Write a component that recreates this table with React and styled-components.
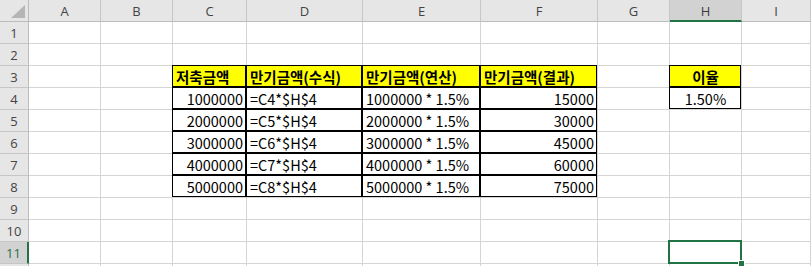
import React from "react";
import styled, { createGlobalStyle, css } from "styled-components";

const Global = createGlobalStyle`
  html, body { margin: 0; padding: 0; background: #fff; }
  body { overflow: hidden; }
`;

const COLS = ["A", "B", "C", "D", "E", "F", "G", "H", "I"];
const WIDTHS = [29, 72, 72, 74, 116, 118, 117, 72, 72];
const GREEN = "#217346";

const Sheet = styled.div`
  display: grid;
  grid-template-columns: ${WIDTHS.map((w) => w + "px").join(" ")} 1fr;
  grid-template-rows: 22px repeat(12, 22px);
  width: 811px;
  height: 266px;
  overflow: hidden;
  font-family: "Noto Sans CJK KR", "Noto Sans", sans-serif;
`;

const Corner = styled.div`
  position: relative;
  background: #e6e6e6;
  border-right: 1px solid #bcbcbc;
  border-bottom: 1px solid #bcbcbc;
  box-sizing: border-box;
`;

const CornerTri = styled.svg`
  position: absolute;
  right: 3px;
  bottom: 3px;
`;

const ColHead = styled.div`
  box-sizing: border-box;
  background: ${(p) => (p.$active ? "#d2d2d2" : "#e6e6e6")};
  border-right: 1px solid #c6c6c6;
  border-bottom: ${(p) => (p.$active ? `2px solid ${GREEN}` : "1px solid #bcbcbc")};
  display: flex;
  align-items: center;
  justify-content: center;
  font-family: "Open Sans", "Noto Sans", sans-serif;
  font-size: 13px;
  color: ${(p) => (p.$active ? "#3a3a3a" : "#444")};
  padding-top: 1px;
`;

const RowHead = styled.div`
  box-sizing: border-box;
  background: ${(p) => (p.$active ? "#d2d2d2" : "#e6e6e6")};
  border-right: ${(p) => (p.$active ? `2px solid ${GREEN}` : "1px solid #bcbcbc")};
  border-bottom: 1px solid #c6c6c6;
  display: flex;
  align-items: center;
  justify-content: center;
  font-family: "Open Sans", "Noto Sans", sans-serif;
  font-size: 13px;
  color: ${(p) => (p.$active ? "#217346" : "#444")};
  padding-top: 1px;
`;

const Cell = styled.div`
  position: relative;
  box-sizing: border-box;
  border-right: 1px solid #d4d4d4;
  border-bottom: 1px solid #d4d4d4;
  background: ${(p) => p.$fill || "#fff"};
  display: flex;
  align-items: flex-end;
  justify-content: ${(p) =>
    p.$align === "right" ? "flex-end" : p.$align === "center" ? "center" : "flex-start"};
  padding: 0 3px 0 3px;
  font-size: 14.5px;
  line-height: 20px;
  font-weight: ${(p) => (p.$bold ? 700 : 400)};
  color: #000;
  white-space: nowrap;
  ${(p) =>
    p.$boxed &&
    css`
      &::after {
        content: "";
        position: absolute;
        top: -1px;
        left: -1px;
        right: 0;
        bottom: 0;
        border: 1px solid #000;
        z-index: 2;
        pointer-events: none;
      }
    `}
  ${(p) =>
    p.$selected &&
    css`
      &::after {
        content: "";
        position: absolute;
        top: -2px;
        left: -2px;
        right: -1px;
        bottom: -1px;
        border: 2px solid ${GREEN};
        z-index: 3;
      }
    `}
`;

const Handle = styled.span`
  position: absolute;
  right: -4px;
  bottom: -4px;
  width: 5px;
  height: 5px;
  background: ${GREEN};
  border: 1px solid #fff;
  z-index: 4;
`;

const data = {
  "C3": { v: "저축금액", bold: true, fill: "#ffff00", boxed: true },
  "D3": { v: "만기금액(수식)", bold: true, fill: "#ffff00", boxed: true },
  "E3": { v: "만기금액(연산)", bold: true, fill: "#ffff00", boxed: true },
  "F3": { v: "만기금액(결과)", bold: true, fill: "#ffff00", boxed: true },
  "H3": { v: "이율", bold: true, fill: "#ffff00", boxed: true, align: "center" },
  "H4": { v: "1.50%", boxed: true, align: "center" },
};
[1, 2, 3, 4, 5].forEach((n) => {
  const r = n + 3;
  data["C" + r] = { v: n + "000000", boxed: true, align: "right" };
  data["D" + r] = { v: `=C${r}*$H$4`, boxed: true };
  data["E" + r] = { v: `${n}000000 * 1.5%`, boxed: true };
  data["F" + r] = { v: String(n * 15000), boxed: true, align: "right" };
});

export default function App() {
  const rows = Array.from({ length: 12 }, (_, i) => i + 1);
  return (
    <>
      <Global />
      <Sheet>
        <Corner>
          <CornerTri width="14" height="13" viewBox="0 0 14 13">
            <polygon points="14,0 14,13 0,13" fill="#b5b5b5" />
          </CornerTri>
        </Corner>
        {COLS.map((c) => (
          <ColHead key={c} $active={c === "H"}>
            {c}
          </ColHead>
        ))}
        {rows.map((r) => (
          <React.Fragment key={r}>
            <RowHead $active={r === 11}>{r <= 11 ? r : ""}</RowHead>
            {COLS.map((c) => {
              const d = data[c + r];
              const sel = c === "H" && r === 11;
              return (
                <Cell
                  key={c + r}
                  $boxed={d?.boxed}
                  $fill={d?.fill}
                  $bold={d?.bold}
                  $align={d?.align}
                  $selected={sel}
                >
                  {d?.v}
                  {sel && <Handle />}
                </Cell>
              );
            })}
          </React.Fragment>
        ))}
      </Sheet>
    </>
  );
}
